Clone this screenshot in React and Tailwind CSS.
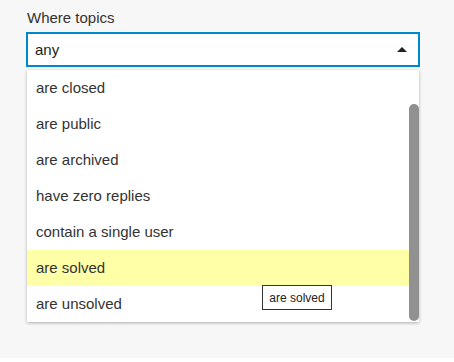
const options = [
  'are closed',
  'are public',
  'are archived',
  'have zero replies',
  'contain a single user',
  'are solved',
  'are unsolved',
];

const App = () => {
  const hovered = 'are solved';

  return (
    <div className="w-[454px] h-[358px] bg-[#f7f7f7] pl-[26px] pt-[9px] font-['Liberation_Sans',Arial,sans-serif] text-[#333]">
      <div className="text-[15px] leading-[18px] pl-[1px]">Where topics</div>

      {/* select */}
      <div className="mt-[5px] w-[394px] h-[35px] border-2 border-[#0088cc] bg-white flex items-center justify-between pl-[7px] pr-[11px]">
        <span className="text-[15px] leading-[18px] text-[#222]">any</span>
        <svg width="10" height="5" viewBox="0 0 10 5">
          <polygon points="0,5 5,0 10,5" fill="#222" />
        </svg>
      </div>

      {/* dropdown */}
      <div className="relative mt-[3px] ml-[1px] w-[392px] bg-white flex shadow-[0_1px_3px_rgba(0,0,0,0.3)]">
        <div className="flex-1 flex flex-col">
          {options.map(o => (
            <div
              key={o}
              className={`h-[36px] flex items-center pl-[9px] text-[15px] leading-[18px] ${o === hovered ? 'bg-[#ffffa8]' : ''}`}
            >
              {o}
            </div>
          ))}
        </div>
        <div className="w-[10px] flex flex-col pt-[34px] pb-[1px]">
          <div className="flex-1 bg-[#919191] rounded-full" />
        </div>

        {/* tooltip */}
        <div className="absolute left-[235px] top-[215px] w-[70px] h-[25px] border border-[#333] bg-white flex items-center justify-center text-[12px] text-[#222]">
          are solved
        </div>
      </div>
    </div>
  );
};

export default App;
